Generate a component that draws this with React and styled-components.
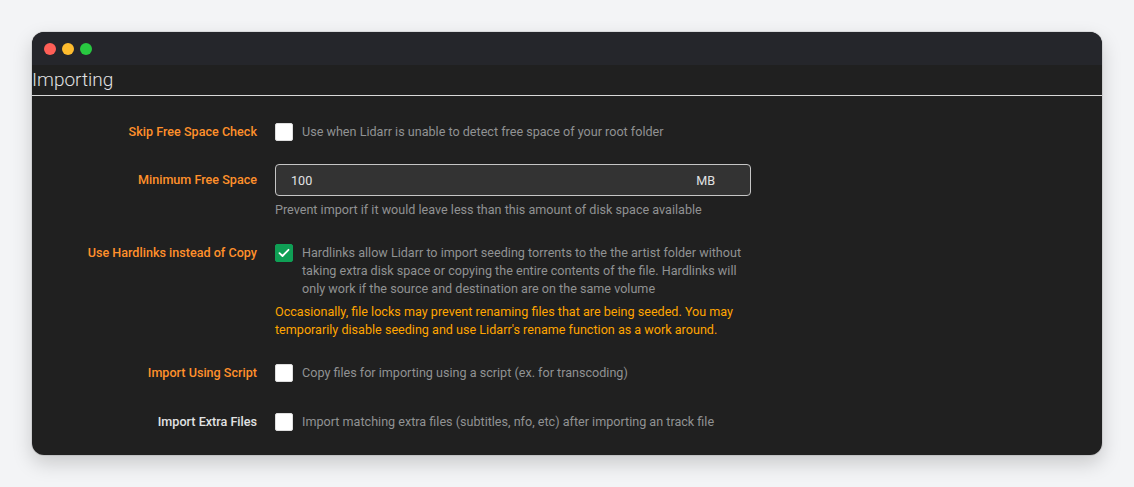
import React from 'react'
import styled, { createGlobalStyle } from 'styled-components'

const GlobalStyle = createGlobalStyle`
    html, body {
        margin: 0;
        padding: 0;
        background: #f3f4f6;
        font-family: Roboto, "Noto Sans", "Liberation Sans", sans-serif;
    }
`

const Page = styled.div`
    padding: 32px;
`

const Window = styled.div`
    width: 1070px;
    border-radius: 12px;
    overflow: hidden;
    background: #202020;
    box-shadow: 0 0 0 1px rgba(0, 0, 0, 0.08), 0 8px 20px rgba(0, 0, 0, 0.18);
`

const TitleBar = styled.div`
    height: 33px;
    background: #25262b;
    display: flex;
    align-items: center;
    gap: 6px;
    padding-left: 12px;
`

const Dot = styled.span`
    width: 12px;
    height: 12px;
    border-radius: 50%;
    background: ${p => p.color};
`

const Content = styled.div`
    padding-bottom: 24px;
`

const Legend = styled.div`
    font-size: 19px;
    font-weight: 300;
    line-height: 30px;
    color: #e1e2e3;
    border-bottom: 1px solid #d8d8d8;
    margin-bottom: 27px;
`

const Group = styled.div`
    display: flex;
    align-items: ${p => (p.center ? 'center' : 'flex-start')};
    gap: 18px;
    margin-top: ${p => p.mt || 0}px;
    margin-bottom: ${p => p.mb || 0}px;
`

const Label = styled.div`
    width: 225px;
    flex-shrink: 0;
    text-align: right;
    font-size: 12.6px;
    font-weight: 500;
    line-height: 18px;
    color: ${p => (p.advanced ? '#ff902b' : '#e1e2e3')};
`

const Field = styled.div`
    display: flex;
    flex-direction: column;
`

const CheckRow = styled.div`
    display: flex;
    align-items: flex-start;
    gap: 9px;
`

const Box = styled.span`
    width: 18px;
    height: 18px;
    flex-shrink: 0;
    border-radius: 2px;
    box-sizing: border-box;
    background: ${p => (p.checked ? '#0f9f55' : '#ffffff')};
    border: 1px solid ${p => (p.checked ? '#0f9f55' : '#dddddd')};
    display: flex;
    align-items: center;
    justify-content: center;
`

const HelpText = styled.div`
    font-size: 12.6px;
    line-height: 18px;
    color: #909293;
    max-width: ${p => p.max || 'none'};
`

const Warning = styled.div`
    font-size: 12.6px;
    line-height: 18px;
    color: #ffa500;
    margin-top: 5px;
    max-width: 465px;
`

const InputWrap = styled.div`
    width: 476px;
    height: 32px;
    box-sizing: border-box;
    display: flex;
    align-items: center;
    justify-content: space-between;
    background: #333333;
    border: 1px solid #c6c6c6;
    border-radius: 4px;
    padding: 0 35px 0 15px;
    font-size: 12.6px;
    color: #e1e2e3;
`

function Checkbox({ checked }) {
    return (
        <Box checked={checked}>
            {checked && (
                <svg width="12" height="10" viewBox="0 0 12 10">
                    <path d="M1.5 5.2 L4.5 8 L10.5 1.8" fill="none" stroke="#fff" strokeWidth="1.8" strokeLinecap="round" strokeLinejoin="round" />
                </svg>
            )}
        </Box>
    )
}

export default function App() {
    return (
        <>
            <GlobalStyle />
            <Page>
                <Window>
                    <TitleBar>
                        <Dot color="#ff5f57" />
                        <Dot color="#febc2e" />
                        <Dot color="#28c840" />
                    </TitleBar>
                    <Content>
                        <Legend>Importing</Legend>

                        <Group mb={23}>
                            <Label advanced>Skip Free Space Check</Label>
                            <CheckRow>
                                <Checkbox />
                                <HelpText>Use when Lidarr is unable to detect free space of your root folder</HelpText>
                            </CheckRow>
                        </Group>

                        <Group center>
                            <Label advanced>Minimum Free Space</Label>
                            <InputWrap>
                                <span>100</span>
                                <span>MB</span>
                            </InputWrap>
                        </Group>
                        <Group mt={5} mb={25}>
                            <Label />
                            <HelpText>Prevent import if it would leave less than this amount of disk space available</HelpText>
                        </Group>

                        <Group mb={25}>
                            <Label advanced>Use Hardlinks instead of Copy</Label>
                            <Field>
                                <CheckRow>
                                    <Checkbox checked />
                                    <HelpText max="445px">
                                        Hardlinks allow Lidarr to import seeding torrents to the the artist folder without taking extra disk space or copying the entire contents of the file. Hardlinks will only work if the source and destination are on the same volume
                                    </HelpText>
                                </CheckRow>
                                <Warning>
                                    Occasionally, file locks may prevent renaming files that are being seeded. You may temporarily disable seeding and use Lidarr's rename function as a work around.
                                </Warning>
                            </Field>
                        </Group>

                        <Group mb={31}>
                            <Label advanced>Import Using Script</Label>
                            <CheckRow>
                                <Checkbox />
                                <HelpText>Copy files for importing using a script (ex. for transcoding)</HelpText>
                            </CheckRow>
                        </Group>

                        <Group>
                            <Label>Import Extra Files</Label>
                            <CheckRow>
                                <Checkbox />
                                <HelpText>Import matching extra files (subtitles, nfo, etc) after importing an track file</HelpText>
                            </CheckRow>
                        </Group>
                    </Content>
                </Window>
            </Page>
        </>
    )
}
